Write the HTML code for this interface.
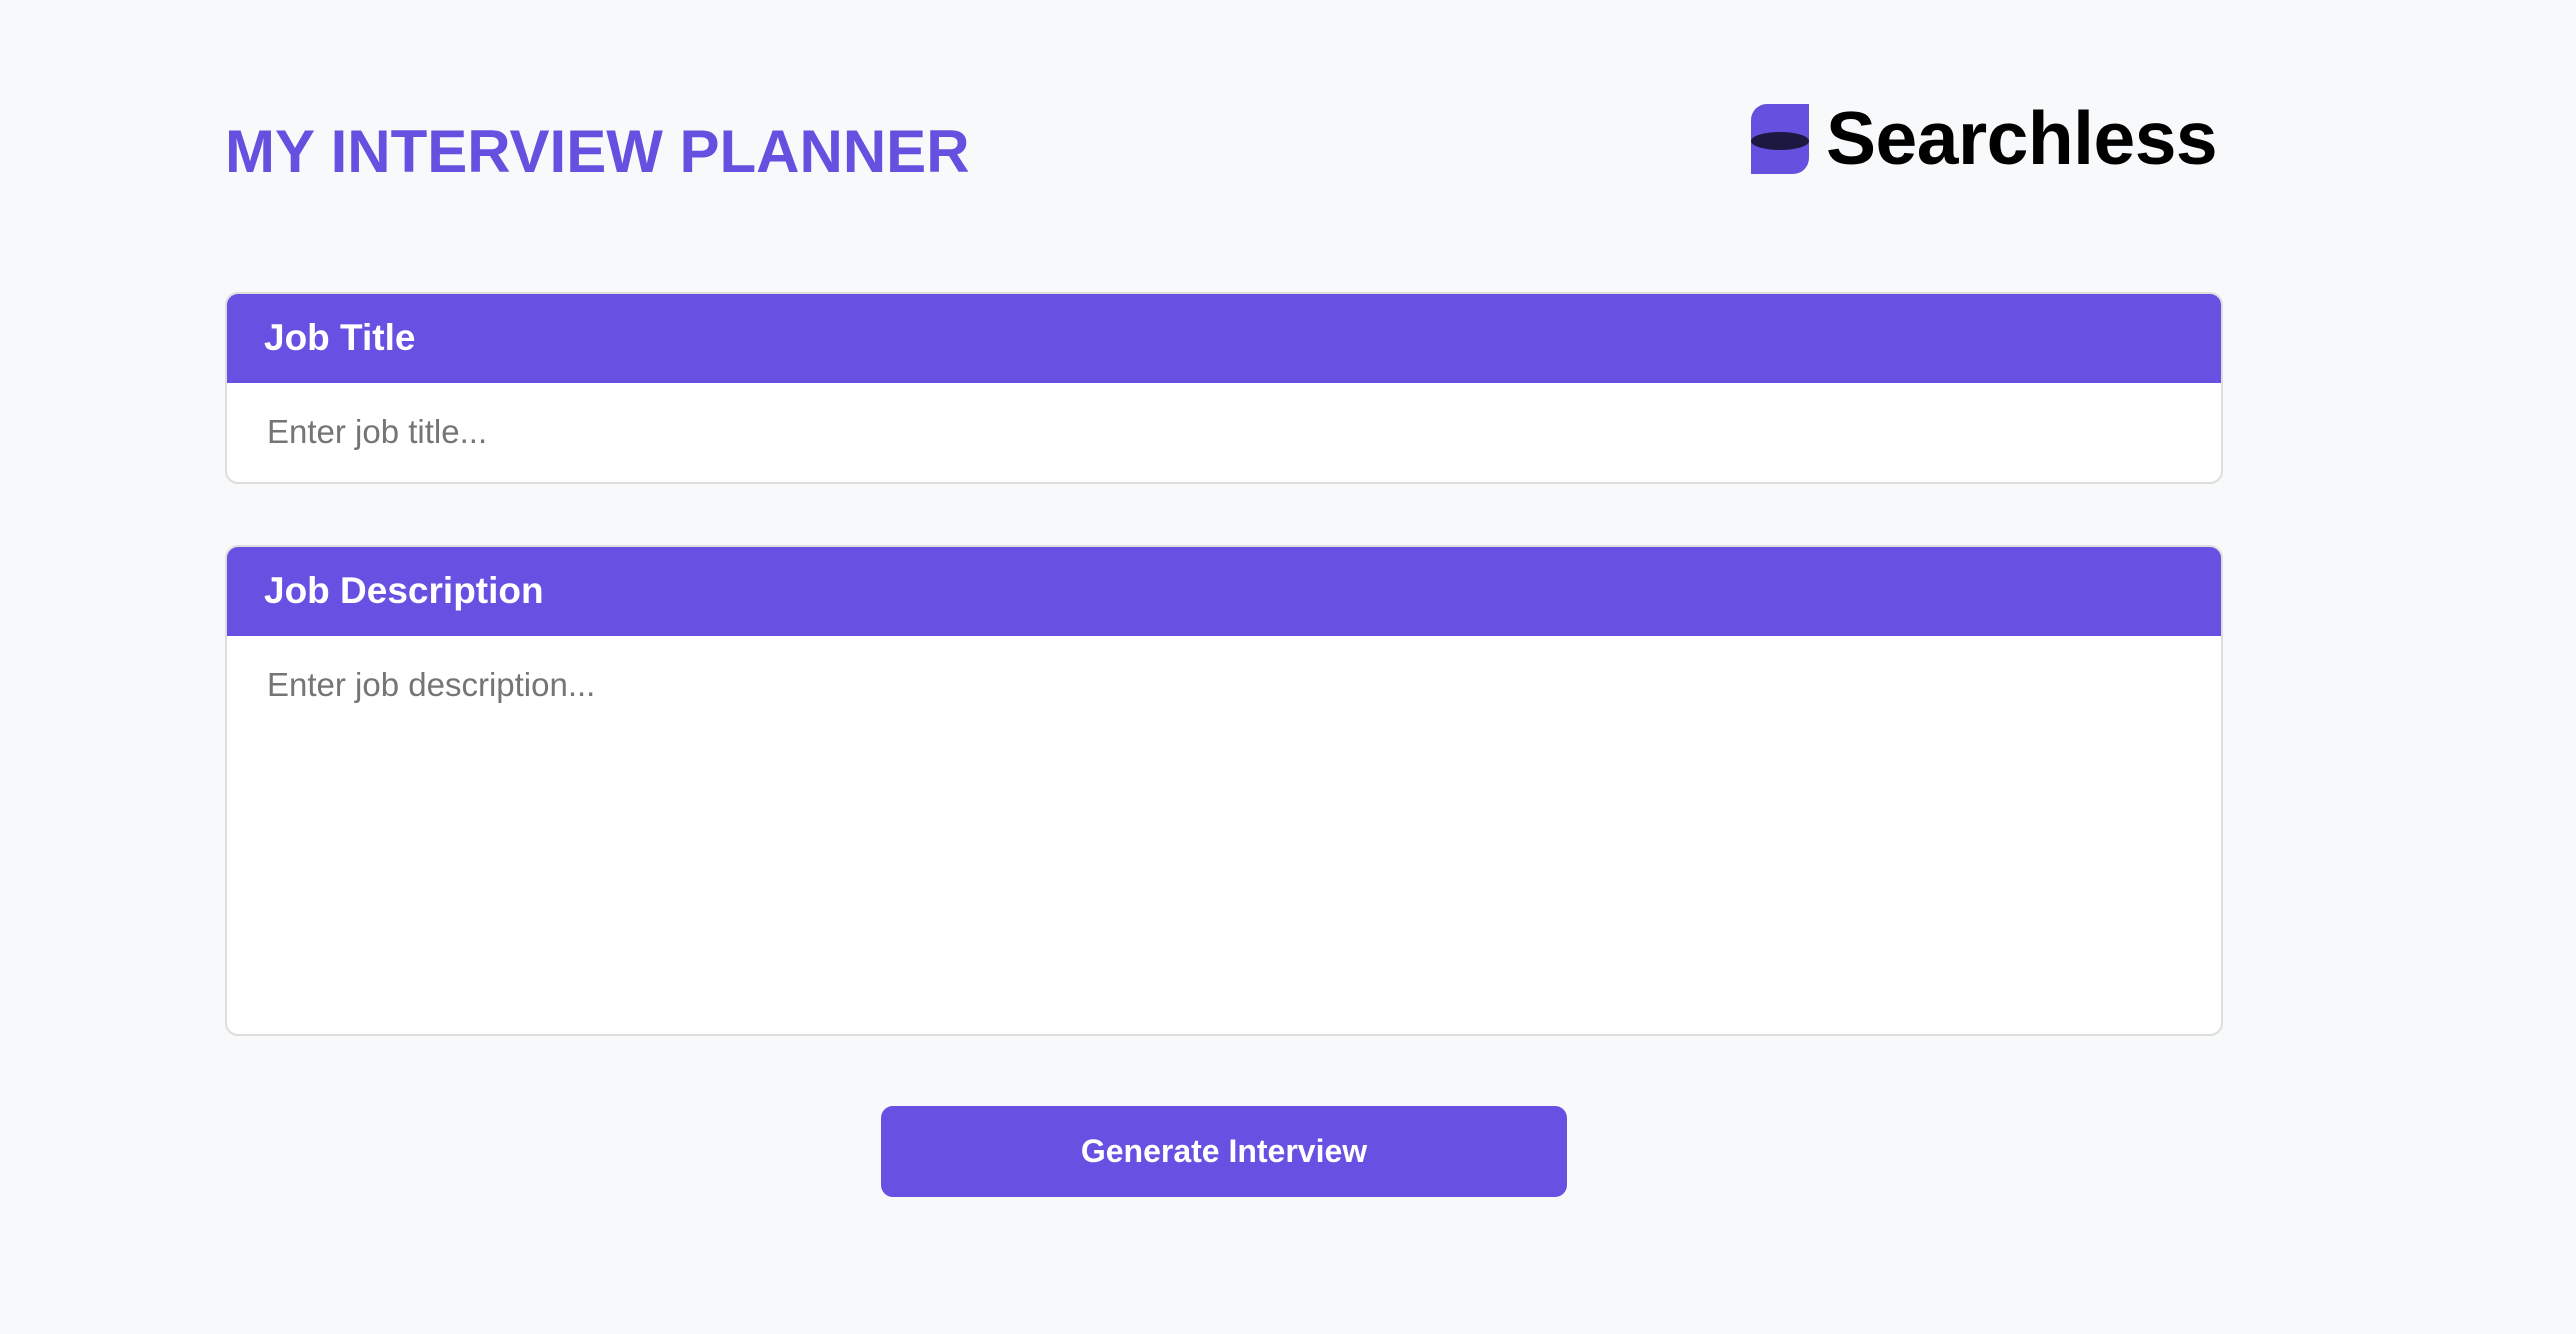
<!DOCTYPE html>
<html><head><meta charset="utf-8"><style>
*{box-sizing:border-box;margin:0;padding:0}
body{width:2576px;height:1334px;background:#f8f9fa;font-family:"Liberation Sans",sans-serif;position:relative;overflow:hidden}
.title{position:absolute;left:225px;top:117px;font-size:60px;font-weight:bold;color:#6650e0;white-space:nowrap}
.logo{position:absolute;left:1751px;top:104px}
.brand{position:absolute;left:1826px;top:101px;font-size:75px;font-weight:bold;color:#000;letter-spacing:-0.5px;line-height:1}
.box{position:absolute;left:225px;width:1998px;background:#fff;border:2px solid #dedede;border-radius:13px;overflow:hidden}
.hd{background:#6750e2;color:#fff;font-weight:bold;font-size:37px;height:91px;line-height:91px;padding-left:39px;margin:-2px -2px 0}
.ph{color:#757575;font-size:33px;padding-left:40px}
.btn{position:absolute;left:881px;top:1106px;width:686px;height:91px;background:#6750e2;border-radius:12px;color:#fff;font-weight:bold;font-size:32px;text-align:center;line-height:91px}
</style></head><body>
<div class="title">MY INTERVIEW PLANNER</div>
<svg class="logo" width="58" height="70" viewBox="0 0 58 70">
<defs><clipPath id="lo"><path d="M0,37 A29,9 0 0 1 58,37 V54 A16,16 0 0 1 42,70 H0 Z"/></clipPath></defs>
<path d="M0,16 A16,16 0 0 1 16,0 H58 V37 A29,9 0 0 1 0,37 Z" fill="#6650e0"/>
<path d="M0,37 A29,9 0 0 1 58,37 V54 A16,16 0 0 1 42,70 H0 Z" fill="#6650e0"/>
<path d="M0,16 A16,16 0 0 1 16,0 H58 V37 A29,9 0 0 1 0,37 Z" fill="#1d1840" clip-path="url(#lo)"/>
</svg>
<div class="brand">Searchless</div>
<div class="box" style="top:292px;height:192px"><div class="hd">Job Title</div><div class="ph" style="line-height:98px">Enter job title...</div></div>
<div class="box" style="top:545px;height:491px"><div class="hd">Job Description</div><div class="ph" style="padding-top:30px">Enter job description...</div></div>
<div class="btn">Generate Interview</div>
</body></html>
